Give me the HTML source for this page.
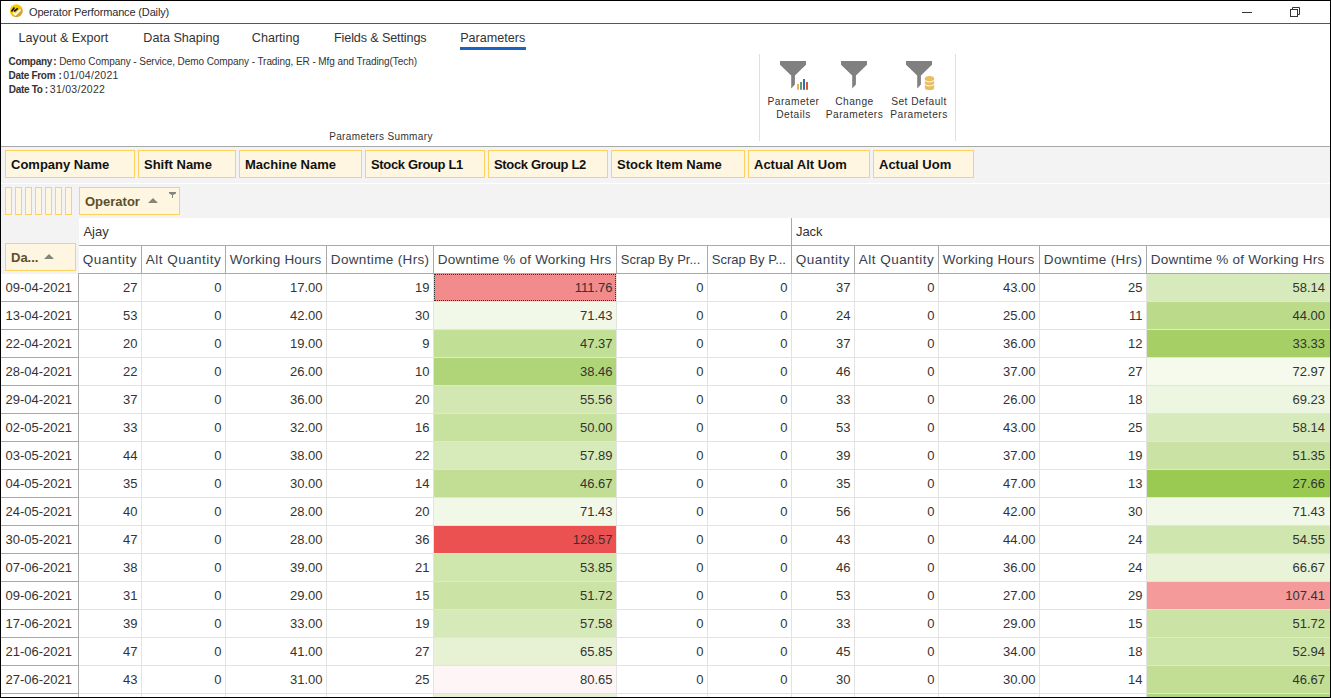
<!DOCTYPE html>
<html><head><meta charset="utf-8">
<style>
*{margin:0;padding:0;box-sizing:border-box}
html,body{width:1331px;height:698px;overflow:hidden;background:#fff}
body{position:relative;font-family:"Liberation Sans",sans-serif;color:#333}
.a{position:absolute}
.t{position:absolute;white-space:nowrap}
.hl{position:absolute;height:1px}
.vl{position:absolute;width:1px}
.box{position:absolute;background:#fff6e1;border:1px solid #fdd35e}
.gb{position:absolute;font-weight:bold;font-size:13px;color:#111;white-space:nowrap;line-height:28px}
.hd{position:absolute;font-size:13.5px;letter-spacing:0.2px;color:#37404c;white-space:nowrap;line-height:28px;top:246px;height:28px}
.c{position:absolute;font-size:13px;color:#333;white-space:nowrap;line-height:28px;text-align:right;height:28px}
.dc{position:absolute;font-size:13px;color:#333;white-space:nowrap;line-height:28px;height:28px;left:1px;width:77px;padding-left:4.5px}
</style></head><body>

<div class="a" style="left:0;top:0;width:1331px;height:1px;background:#000"></div>
<div class="a" style="left:0;top:0;width:1px;height:698px;background:#000"></div>
<div class="a" style="left:1330px;top:0;width:1px;height:698px;background:#000"></div>
<div class="a" style="left:0;top:697px;width:1331px;height:1px;background:#000"></div>
<svg class="a" style="left:9px;top:4px" width="14" height="14" viewBox="0 0 14 14">
<defs><linearGradient id="g1" x1="0.2" y1="0.2" x2="0.9" y2="0.9"><stop offset="0" stop-color="#fdd000"/><stop offset="0.5" stop-color="#f3c300"/><stop offset="0.62" stop-color="#d9aa2a"/><stop offset="1" stop-color="#cfa030"/></linearGradient></defs>
<circle cx="7.3" cy="6.75" r="6.5" fill="url(#g1)"/>
<path d="M2.4 7.5 L5.4 3.6 M5 7.4 L8.8 4.3" stroke="#111" stroke-width="1.6"/>
<path d="M4.3 8.7 L6.35 10.8 L11.5 5.6" stroke="#fff" stroke-width="1.8" fill="none"/>
</svg>
<div class="t" style="left:29px;top:4px;font-size:11px;letter-spacing:-0.15px;line-height:16px;color:#2b2b33">Operator Performance (Daily)</div>
<div class="a" style="left:1242px;top:12px;width:10px;height:1px;background:#333"></div>
<svg class="a" style="left:1289px;top:6px" width="12" height="12" viewBox="0 0 12 12">
<rect x="1.5" y="3.5" width="7" height="7" fill="none" stroke="#333" stroke-width="1"/>
<path d="M3.5 3.5 V1.5 H10.5 V8.5 H8.5" fill="none" stroke="#333" stroke-width="1"/>
</svg>
<div class="a" style="left:1px;top:23px;width:1329px;height:1px;background:#555"></div>
<div class="t" style="left:18.6px;top:29px;font-size:12.6px;line-height:18px;color:#333">Layout &amp; Export</div>
<div class="t" style="left:143.3px;top:29px;font-size:12.6px;line-height:18px;color:#333">Data Shaping</div>
<div class="t" style="left:251.8px;top:29px;font-size:12.6px;line-height:18px;color:#333">Charting</div>
<div class="t" style="left:334px;top:29px;font-size:12.6px;line-height:18px;color:#333;letter-spacing:-0.12px">Fields &amp; Settings</div>
<div class="t" style="left:460.2px;top:29px;font-size:12.6px;line-height:18px;color:#333">Parameters</div>
<div class="a" style="left:460px;top:47px;width:66px;height:3px;background:#1a62c4"></div>
<div class="t" style="left:8.5px;top:55px;font-size:10px;line-height:14px;color:#333;font-weight:bold;letter-spacing:-0.3px">Company</div>
<div class="t" style="left:53.3px;top:55px;font-size:10px;line-height:14px;color:#333;font-weight:bold;letter-spacing:-0.3px">:</div>
<div class="t" style="left:59.2px;top:55px;font-size:10px;line-height:14px;color:#333;letter-spacing:-0.07px">Demo Company - Service, Demo Company - Trading, ER - Mfg and Trading(Tech)</div>
<div class="t" style="left:8.5px;top:69px;font-size:10px;line-height:14px;color:#333;font-weight:bold;letter-spacing:-0.3px">Date From</div>
<div class="t" style="left:58.6px;top:69px;font-size:10px;line-height:14px;color:#333;font-weight:bold;letter-spacing:-0.3px">:</div>
<div class="t" style="left:63.3px;top:68px;font-size:10px;line-height:14px;color:#333;letter-spacing:0.28px;font-size:10.5px">01/04/2021</div>
<div class="t" style="left:8.8px;top:83px;font-size:10px;line-height:14px;color:#333;font-weight:bold;letter-spacing:-0.3px">Date To</div>
<div class="t" style="left:44.8px;top:83px;font-size:10px;line-height:14px;color:#333;font-weight:bold;letter-spacing:-0.3px">:</div>
<div class="t" style="left:49.8px;top:82px;font-size:10px;line-height:14px;color:#333;letter-spacing:0.28px;font-size:10.5px">31/03/2022</div>
<div class="t" style="left:329.2px;top:130px;font-size:10px;letter-spacing:0.35px;line-height:14px;color:#333">Parameters Summary</div>
<div class="a" style="left:759px;top:54px;width:1px;height:87px;background:#e0e0e0"></div>
<div class="a" style="left:955px;top:54px;width:1px;height:87px;background:#e0e0e0"></div>
<svg class="a" style="left:0;top:0" width="1331" height="100" viewBox="0 0 1331 100">
<path d="M780 61 H806 V64.75 L794.9 75.4 V84.5 L791.2 88.5 V75.4 L780 64.75 Z" fill="#808080"/>
<rect x="797" y="84" width="2" height="5.8" fill="#eab552"/>
<rect x="800" y="82" width="2" height="7.8" fill="#5d9b7c"/>
<rect x="803" y="79" width="2" height="10.8" fill="#3170b5"/>
<rect x="806" y="82" width="2" height="7.8" fill="#d8592f"/>
<path d="M841 61 H867 V64.75 L855.9 75.4 V84.5 L852.2 88.5 V75.4 L841 64.75 Z" fill="#808080"/>
<path d="M906 61 H932 V64.75 L920.9 75.4 V84.5 L917.2 88.5 V75.4 L906 64.75 Z" fill="#808080"/>
<g fill="#e9be62"><ellipse cx="929.5" cy="78.6" rx="4.6" ry="2.6"/><rect x="924.9" y="78.6" width="9.2" height="9.4"/><ellipse cx="929.5" cy="88" rx="4.6" ry="2"/></g><path d="M924.6 80.3 Q929.5 83.6 934.4 80.3 M924.6 84.3 Q929.5 87.6 934.4 84.3" stroke="#fff" stroke-width="0.9" fill="none"/>
</svg>
<div class="t" style="left:753.5px;width:80px;text-align:center;top:95px;font-size:10.2px;letter-spacing:0.48px;line-height:13px;color:#333">Parameter</div>
<div class="t" style="left:753.5px;width:80px;text-align:center;top:108px;font-size:10.2px;letter-spacing:0.48px;line-height:13px;color:#333">Details</div>
<div class="t" style="left:814.5px;width:80px;text-align:center;top:95px;font-size:10.2px;letter-spacing:0.48px;line-height:13px;color:#333">Change</div>
<div class="t" style="left:814.5px;width:80px;text-align:center;top:108px;font-size:10.2px;letter-spacing:0.48px;line-height:13px;color:#333">Parameters</div>
<div class="t" style="left:879px;width:80px;text-align:center;top:95px;font-size:10.2px;letter-spacing:0.48px;line-height:13px;color:#333">Set Default</div>
<div class="t" style="left:879px;width:80px;text-align:center;top:108px;font-size:10.2px;letter-spacing:0.48px;line-height:13px;color:#333">Parameters</div>
<div class="a" style="left:1px;top:146px;width:1329px;height:1px;background:#a8a8a8"></div>
<div class="a" style="left:1px;top:147px;width:1329px;height:36px;background:#f3f3f3"></div>
<div class="a" style="left:1px;top:184px;width:1329px;height:34px;background:#f3f3f3"></div>
<div class="a" style="left:1px;top:218px;width:78px;height:56px;background:#f3f3f3"></div>
<div class="box" style="left:5px;top:150px;width:130px;height:28px"><div class="gb" style="left:5px;top:0">Company Name</div></div>
<div class="box" style="left:138px;top:150px;width:98px;height:28px"><div class="gb" style="left:5px;top:0">Shift Name</div></div>
<div class="box" style="left:239px;top:150px;width:123px;height:28px"><div class="gb" style="left:5px;top:0">Machine Name</div></div>
<div class="box" style="left:365px;top:150px;width:120px;height:28px"><div class="gb" style="left:5px;top:0;letter-spacing:-0.35px">Stock Group L1</div></div>
<div class="box" style="left:488px;top:150px;width:120px;height:28px"><div class="gb" style="left:5px;top:0;letter-spacing:-0.35px">Stock Group L2</div></div>
<div class="box" style="left:611px;top:150px;width:134px;height:28px"><div class="gb" style="left:5px;top:0">Stock Item Name</div></div>
<div class="box" style="left:748px;top:150px;width:122px;height:28px"><div class="gb" style="left:5px;top:0">Actual Alt Uom</div></div>
<div class="box" style="left:873px;top:150px;width:101px;height:28px"><div class="gb" style="left:5px;top:0">Actual Uom</div></div>
<div class="box" style="left:5px;top:187px;width:7px;height:28px"></div>
<div class="box" style="left:15px;top:187px;width:7px;height:28px"></div>
<div class="box" style="left:25px;top:187px;width:7px;height:28px"></div>
<div class="box" style="left:35px;top:187px;width:7px;height:28px"></div>
<div class="box" style="left:45px;top:187px;width:7px;height:28px"></div>
<div class="box" style="left:55px;top:187px;width:7px;height:28px"></div>
<div class="box" style="left:65px;top:187px;width:7px;height:28px"></div>
<div class="box" style="left:79px;top:187px;width:101px;height:28px"><div class="gb" style="left:5px;top:0;color:#5c4f2c">Operator</div></div>
<svg class="a" style="left:148px;top:198px" width="10" height="5" viewBox="0 0 10 5"><path d="M0 5 L5 0 L10 5 Z" fill="#858578"/></svg>
<svg class="a" style="left:169px;top:192px" width="7" height="6" viewBox="0 0 7 6"><path d="M0 0 H7 V1.5 L4 3 V6 H3 V3 L0 1.5 Z" fill="#858585"/></svg>
<div class="box" style="left:5px;top:243px;width:71px;height:28px"><div class="gb" style="left:5px;top:0;color:#5c4f2c">Da...</div></div>
<svg class="a" style="left:44px;top:254px" width="10" height="5" viewBox="0 0 10 5"><path d="M0 5 L5 0 L10 5 Z" fill="#858578"/></svg>
<div class="t" style="left:83.4px;top:218px;font-size:13px;line-height:27px;color:#333">Ajay</div>
<div class="t" style="left:795.9px;top:218px;font-size:13px;line-height:27px;color:#333">Jack</div>
<div class="a" style="left:79px;top:245px;width:1251px;height:1px;background:#a9a9a9"></div>
<div class="a" style="left:791px;top:218px;width:1px;height:27px;background:#a9a9a9"></div>
<div class="hd" style="left:82.8px;letter-spacing:0.5px">Quantity</div>
<div class="a" style="left:141px;top:246px;width:1px;height:27px;background:#a9a9a9"></div>
<div class="hd" style="left:145.8px;letter-spacing:0.47px">Alt Quantity</div>
<div class="a" style="left:225px;top:246px;width:1px;height:27px;background:#a9a9a9"></div>
<div class="hd" style="left:229.8px">Working Hours</div>
<div class="a" style="left:326px;top:246px;width:1px;height:27px;background:#a9a9a9"></div>
<div class="hd" style="left:330.8px;letter-spacing:0.35px">Downtime (Hrs)</div>
<div class="a" style="left:433px;top:246px;width:1px;height:27px;background:#a9a9a9"></div>
<div class="hd" style="left:437.8px">Downtime % of Working Hrs</div>
<div class="a" style="left:616px;top:246px;width:1px;height:27px;background:#a9a9a9"></div>
<div class="hd" style="left:620.8px;letter-spacing:0;font-size:13px">Scrap By Pr...</div>
<div class="a" style="left:707px;top:246px;width:1px;height:27px;background:#a9a9a9"></div>
<div class="hd" style="left:711.8px;letter-spacing:0;font-size:13px">Scrap By P...</div>
<div class="a" style="left:791px;top:246px;width:1px;height:27px;background:#a9a9a9"></div>
<div class="hd" style="left:795.8px;letter-spacing:0.5px">Quantity</div>
<div class="a" style="left:854px;top:246px;width:1px;height:27px;background:#a9a9a9"></div>
<div class="hd" style="left:858.8px;letter-spacing:0.47px">Alt Quantity</div>
<div class="a" style="left:938px;top:246px;width:1px;height:27px;background:#a9a9a9"></div>
<div class="hd" style="left:942.8px">Working Hours</div>
<div class="a" style="left:1039px;top:246px;width:1px;height:27px;background:#a9a9a9"></div>
<div class="hd" style="left:1043.8px;letter-spacing:0.35px">Downtime (Hrs)</div>
<div class="a" style="left:1146px;top:246px;width:1px;height:27px;background:#a9a9a9"></div>
<div class="hd" style="left:1150.8px">Downtime % of Working Hrs</div>
<div class="a" style="left:79px;top:273px;width:1251px;height:1px;background:#a9a9a9"></div>
<div class="dc" style="top:274px">09-04-2021</div>
<div class="a" style="left:1px;top:301px;width:77px;height:1px;background:#a9a9a9"></div>
<div class="c" style="left:79px;width:58.5px;top:274px">27</div>
<div class="c" style="left:142px;width:79.5px;top:274px">0</div>
<div class="c" style="left:226px;width:96.5px;top:274px">17.00</div>
<div class="c" style="left:327px;width:102.5px;top:274px">19</div>
<div class="a" style="left:434px;top:274px;width:182px;height:27px;background:#f28b8b"></div>
<div class="c" style="left:434px;width:178.5px;top:274px">111.76</div>
<div class="c" style="left:617px;width:86.5px;top:274px">0</div>
<div class="c" style="left:708px;width:79.5px;top:274px">0</div>
<div class="c" style="left:792px;width:58.5px;top:274px">37</div>
<div class="c" style="left:855px;width:79.5px;top:274px">0</div>
<div class="c" style="left:939px;width:96.5px;top:274px">43.00</div>
<div class="c" style="left:1040px;width:102.5px;top:274px">25</div>
<div class="a" style="left:1147px;top:274px;width:183px;height:27px;background:#d7eabb"></div>
<div class="c" style="left:1147px;width:178.0px;top:274px">58.14</div>
<div class="a" style="left:79px;top:301px;width:1251px;height:1px;background:#e3e3e3"></div>
<div class="dc" style="top:302px">13-04-2021</div>
<div class="a" style="left:1px;top:329px;width:77px;height:1px;background:#a9a9a9"></div>
<div class="c" style="left:79px;width:58.5px;top:302px">53</div>
<div class="c" style="left:142px;width:79.5px;top:302px">0</div>
<div class="c" style="left:226px;width:96.5px;top:302px">42.00</div>
<div class="c" style="left:327px;width:102.5px;top:302px">30</div>
<div class="a" style="left:434px;top:302px;width:182px;height:27px;background:#f2f8e8"></div>
<div class="c" style="left:434px;width:178.5px;top:302px">71.43</div>
<div class="c" style="left:617px;width:86.5px;top:302px">0</div>
<div class="c" style="left:708px;width:79.5px;top:302px">0</div>
<div class="c" style="left:792px;width:58.5px;top:302px">24</div>
<div class="c" style="left:855px;width:79.5px;top:302px">0</div>
<div class="c" style="left:939px;width:96.5px;top:302px">25.00</div>
<div class="c" style="left:1040px;width:102.5px;top:302px">11</div>
<div class="a" style="left:1147px;top:302px;width:183px;height:27px;background:#bbdb8b"></div>
<div class="c" style="left:1147px;width:178.0px;top:302px">44.00</div>
<div class="a" style="left:79px;top:329px;width:1251px;height:1px;background:#e3e3e3"></div>
<div class="dc" style="top:330px">22-04-2021</div>
<div class="a" style="left:1px;top:357px;width:77px;height:1px;background:#a9a9a9"></div>
<div class="c" style="left:79px;width:58.5px;top:330px">20</div>
<div class="c" style="left:142px;width:79.5px;top:330px">0</div>
<div class="c" style="left:226px;width:96.5px;top:330px">19.00</div>
<div class="c" style="left:327px;width:102.5px;top:330px">9</div>
<div class="a" style="left:434px;top:330px;width:182px;height:27px;background:#c2df96"></div>
<div class="c" style="left:434px;width:178.5px;top:330px">47.37</div>
<div class="c" style="left:617px;width:86.5px;top:330px">0</div>
<div class="c" style="left:708px;width:79.5px;top:330px">0</div>
<div class="c" style="left:792px;width:58.5px;top:330px">37</div>
<div class="c" style="left:855px;width:79.5px;top:330px">0</div>
<div class="c" style="left:939px;width:96.5px;top:330px">36.00</div>
<div class="c" style="left:1040px;width:102.5px;top:330px">12</div>
<div class="a" style="left:1147px;top:330px;width:183px;height:27px;background:#a6d066"></div>
<div class="c" style="left:1147px;width:178.0px;top:330px">33.33</div>
<div class="a" style="left:79px;top:357px;width:1251px;height:1px;background:#e3e3e3"></div>
<div class="dc" style="top:358px">28-04-2021</div>
<div class="a" style="left:1px;top:385px;width:77px;height:1px;background:#a9a9a9"></div>
<div class="c" style="left:79px;width:58.5px;top:358px">22</div>
<div class="c" style="left:142px;width:79.5px;top:358px">0</div>
<div class="c" style="left:226px;width:96.5px;top:358px">26.00</div>
<div class="c" style="left:327px;width:102.5px;top:358px">10</div>
<div class="a" style="left:434px;top:358px;width:182px;height:27px;background:#b0d578"></div>
<div class="c" style="left:434px;width:178.5px;top:358px">38.46</div>
<div class="c" style="left:617px;width:86.5px;top:358px">0</div>
<div class="c" style="left:708px;width:79.5px;top:358px">0</div>
<div class="c" style="left:792px;width:58.5px;top:358px">46</div>
<div class="c" style="left:855px;width:79.5px;top:358px">0</div>
<div class="c" style="left:939px;width:96.5px;top:358px">37.00</div>
<div class="c" style="left:1040px;width:102.5px;top:358px">27</div>
<div class="a" style="left:1147px;top:358px;width:183px;height:27px;background:#f5faed"></div>
<div class="c" style="left:1147px;width:178.0px;top:358px">72.97</div>
<div class="a" style="left:79px;top:385px;width:1251px;height:1px;background:#e3e3e3"></div>
<div class="dc" style="top:386px">29-04-2021</div>
<div class="a" style="left:1px;top:413px;width:77px;height:1px;background:#a9a9a9"></div>
<div class="c" style="left:79px;width:58.5px;top:386px">37</div>
<div class="c" style="left:142px;width:79.5px;top:386px">0</div>
<div class="c" style="left:226px;width:96.5px;top:386px">36.00</div>
<div class="c" style="left:327px;width:102.5px;top:386px">20</div>
<div class="a" style="left:434px;top:386px;width:182px;height:27px;background:#d2e7b2"></div>
<div class="c" style="left:434px;width:178.5px;top:386px">55.56</div>
<div class="c" style="left:617px;width:86.5px;top:386px">0</div>
<div class="c" style="left:708px;width:79.5px;top:386px">0</div>
<div class="c" style="left:792px;width:58.5px;top:386px">33</div>
<div class="c" style="left:855px;width:79.5px;top:386px">0</div>
<div class="c" style="left:939px;width:96.5px;top:386px">26.00</div>
<div class="c" style="left:1040px;width:102.5px;top:386px">18</div>
<div class="a" style="left:1147px;top:386px;width:183px;height:27px;background:#edf6e1"></div>
<div class="c" style="left:1147px;width:178.0px;top:386px">69.23</div>
<div class="a" style="left:79px;top:413px;width:1251px;height:1px;background:#e3e3e3"></div>
<div class="dc" style="top:414px">02-05-2021</div>
<div class="a" style="left:1px;top:441px;width:77px;height:1px;background:#a9a9a9"></div>
<div class="c" style="left:79px;width:58.5px;top:414px">33</div>
<div class="c" style="left:142px;width:79.5px;top:414px">0</div>
<div class="c" style="left:226px;width:96.5px;top:414px">32.00</div>
<div class="c" style="left:327px;width:102.5px;top:414px">16</div>
<div class="a" style="left:434px;top:414px;width:182px;height:27px;background:#c7e19f"></div>
<div class="c" style="left:434px;width:178.5px;top:414px">50.00</div>
<div class="c" style="left:617px;width:86.5px;top:414px">0</div>
<div class="c" style="left:708px;width:79.5px;top:414px">0</div>
<div class="c" style="left:792px;width:58.5px;top:414px">53</div>
<div class="c" style="left:855px;width:79.5px;top:414px">0</div>
<div class="c" style="left:939px;width:96.5px;top:414px">43.00</div>
<div class="c" style="left:1040px;width:102.5px;top:414px">25</div>
<div class="a" style="left:1147px;top:414px;width:183px;height:27px;background:#d7eabb"></div>
<div class="c" style="left:1147px;width:178.0px;top:414px">58.14</div>
<div class="a" style="left:79px;top:441px;width:1251px;height:1px;background:#e3e3e3"></div>
<div class="dc" style="top:442px">03-05-2021</div>
<div class="a" style="left:1px;top:469px;width:77px;height:1px;background:#a9a9a9"></div>
<div class="c" style="left:79px;width:58.5px;top:442px">44</div>
<div class="c" style="left:142px;width:79.5px;top:442px">0</div>
<div class="c" style="left:226px;width:96.5px;top:442px">38.00</div>
<div class="c" style="left:327px;width:102.5px;top:442px">22</div>
<div class="a" style="left:434px;top:442px;width:182px;height:27px;background:#d7eaba"></div>
<div class="c" style="left:434px;width:178.5px;top:442px">57.89</div>
<div class="c" style="left:617px;width:86.5px;top:442px">0</div>
<div class="c" style="left:708px;width:79.5px;top:442px">0</div>
<div class="c" style="left:792px;width:58.5px;top:442px">39</div>
<div class="c" style="left:855px;width:79.5px;top:442px">0</div>
<div class="c" style="left:939px;width:96.5px;top:442px">37.00</div>
<div class="c" style="left:1040px;width:102.5px;top:442px">19</div>
<div class="a" style="left:1147px;top:442px;width:183px;height:27px;background:#cae3a4"></div>
<div class="c" style="left:1147px;width:178.0px;top:442px">51.35</div>
<div class="a" style="left:79px;top:469px;width:1251px;height:1px;background:#e3e3e3"></div>
<div class="dc" style="top:470px">04-05-2021</div>
<div class="a" style="left:1px;top:497px;width:77px;height:1px;background:#a9a9a9"></div>
<div class="c" style="left:79px;width:58.5px;top:470px">35</div>
<div class="c" style="left:142px;width:79.5px;top:470px">0</div>
<div class="c" style="left:226px;width:96.5px;top:470px">30.00</div>
<div class="c" style="left:327px;width:102.5px;top:470px">14</div>
<div class="a" style="left:434px;top:470px;width:182px;height:27px;background:#c1de94"></div>
<div class="c" style="left:434px;width:178.5px;top:470px">46.67</div>
<div class="c" style="left:617px;width:86.5px;top:470px">0</div>
<div class="c" style="left:708px;width:79.5px;top:470px">0</div>
<div class="c" style="left:792px;width:58.5px;top:470px">35</div>
<div class="c" style="left:855px;width:79.5px;top:470px">0</div>
<div class="c" style="left:939px;width:96.5px;top:470px">47.00</div>
<div class="c" style="left:1040px;width:102.5px;top:470px">13</div>
<div class="a" style="left:1147px;top:470px;width:183px;height:27px;background:#9bca53"></div>
<div class="c" style="left:1147px;width:178.0px;top:470px">27.66</div>
<div class="a" style="left:79px;top:497px;width:1251px;height:1px;background:#e3e3e3"></div>
<div class="dc" style="top:498px">24-05-2021</div>
<div class="a" style="left:1px;top:525px;width:77px;height:1px;background:#a9a9a9"></div>
<div class="c" style="left:79px;width:58.5px;top:498px">40</div>
<div class="c" style="left:142px;width:79.5px;top:498px">0</div>
<div class="c" style="left:226px;width:96.5px;top:498px">28.00</div>
<div class="c" style="left:327px;width:102.5px;top:498px">20</div>
<div class="a" style="left:434px;top:498px;width:182px;height:27px;background:#f2f8e8"></div>
<div class="c" style="left:434px;width:178.5px;top:498px">71.43</div>
<div class="c" style="left:617px;width:86.5px;top:498px">0</div>
<div class="c" style="left:708px;width:79.5px;top:498px">0</div>
<div class="c" style="left:792px;width:58.5px;top:498px">56</div>
<div class="c" style="left:855px;width:79.5px;top:498px">0</div>
<div class="c" style="left:939px;width:96.5px;top:498px">42.00</div>
<div class="c" style="left:1040px;width:102.5px;top:498px">30</div>
<div class="a" style="left:1147px;top:498px;width:183px;height:27px;background:#f2f8e8"></div>
<div class="c" style="left:1147px;width:178.0px;top:498px">71.43</div>
<div class="a" style="left:79px;top:525px;width:1251px;height:1px;background:#e3e3e3"></div>
<div class="dc" style="top:526px">30-05-2021</div>
<div class="a" style="left:1px;top:553px;width:77px;height:1px;background:#a9a9a9"></div>
<div class="c" style="left:79px;width:58.5px;top:526px">47</div>
<div class="c" style="left:142px;width:79.5px;top:526px">0</div>
<div class="c" style="left:226px;width:96.5px;top:526px">28.00</div>
<div class="c" style="left:327px;width:102.5px;top:526px">36</div>
<div class="a" style="left:434px;top:526px;width:182px;height:27px;background:#ec5151"></div>
<div class="c" style="left:434px;width:178.5px;top:526px">128.57</div>
<div class="c" style="left:617px;width:86.5px;top:526px">0</div>
<div class="c" style="left:708px;width:79.5px;top:526px">0</div>
<div class="c" style="left:792px;width:58.5px;top:526px">43</div>
<div class="c" style="left:855px;width:79.5px;top:526px">0</div>
<div class="c" style="left:939px;width:96.5px;top:526px">44.00</div>
<div class="c" style="left:1040px;width:102.5px;top:526px">24</div>
<div class="a" style="left:1147px;top:526px;width:183px;height:27px;background:#d0e6af"></div>
<div class="c" style="left:1147px;width:178.0px;top:526px">54.55</div>
<div class="a" style="left:79px;top:553px;width:1251px;height:1px;background:#e3e3e3"></div>
<div class="dc" style="top:554px">07-06-2021</div>
<div class="a" style="left:1px;top:581px;width:77px;height:1px;background:#a9a9a9"></div>
<div class="c" style="left:79px;width:58.5px;top:554px">38</div>
<div class="c" style="left:142px;width:79.5px;top:554px">0</div>
<div class="c" style="left:226px;width:96.5px;top:554px">39.00</div>
<div class="c" style="left:327px;width:102.5px;top:554px">21</div>
<div class="a" style="left:434px;top:554px;width:182px;height:27px;background:#cfe6ac"></div>
<div class="c" style="left:434px;width:178.5px;top:554px">53.85</div>
<div class="c" style="left:617px;width:86.5px;top:554px">0</div>
<div class="c" style="left:708px;width:79.5px;top:554px">0</div>
<div class="c" style="left:792px;width:58.5px;top:554px">46</div>
<div class="c" style="left:855px;width:79.5px;top:554px">0</div>
<div class="c" style="left:939px;width:96.5px;top:554px">36.00</div>
<div class="c" style="left:1040px;width:102.5px;top:554px">24</div>
<div class="a" style="left:1147px;top:554px;width:183px;height:27px;background:#e8f3d8"></div>
<div class="c" style="left:1147px;width:178.0px;top:554px">66.67</div>
<div class="a" style="left:79px;top:581px;width:1251px;height:1px;background:#e3e3e3"></div>
<div class="dc" style="top:582px">09-06-2021</div>
<div class="a" style="left:1px;top:609px;width:77px;height:1px;background:#a9a9a9"></div>
<div class="c" style="left:79px;width:58.5px;top:582px">31</div>
<div class="c" style="left:142px;width:79.5px;top:582px">0</div>
<div class="c" style="left:226px;width:96.5px;top:582px">29.00</div>
<div class="c" style="left:327px;width:102.5px;top:582px">15</div>
<div class="a" style="left:434px;top:582px;width:182px;height:27px;background:#cbe3a5"></div>
<div class="c" style="left:434px;width:178.5px;top:582px">51.72</div>
<div class="c" style="left:617px;width:86.5px;top:582px">0</div>
<div class="c" style="left:708px;width:79.5px;top:582px">0</div>
<div class="c" style="left:792px;width:58.5px;top:582px">53</div>
<div class="c" style="left:855px;width:79.5px;top:582px">0</div>
<div class="c" style="left:939px;width:96.5px;top:582px">27.00</div>
<div class="c" style="left:1040px;width:102.5px;top:582px">29</div>
<div class="a" style="left:1147px;top:582px;width:183px;height:27px;background:#f49a9a"></div>
<div class="c" style="left:1147px;width:178.0px;top:582px">107.41</div>
<div class="a" style="left:79px;top:609px;width:1251px;height:1px;background:#e3e3e3"></div>
<div class="dc" style="top:610px">17-06-2021</div>
<div class="a" style="left:1px;top:637px;width:77px;height:1px;background:#a9a9a9"></div>
<div class="c" style="left:79px;width:58.5px;top:610px">39</div>
<div class="c" style="left:142px;width:79.5px;top:610px">0</div>
<div class="c" style="left:226px;width:96.5px;top:610px">33.00</div>
<div class="c" style="left:327px;width:102.5px;top:610px">19</div>
<div class="a" style="left:434px;top:610px;width:182px;height:27px;background:#d6e9b9"></div>
<div class="c" style="left:434px;width:178.5px;top:610px">57.58</div>
<div class="c" style="left:617px;width:86.5px;top:610px">0</div>
<div class="c" style="left:708px;width:79.5px;top:610px">0</div>
<div class="c" style="left:792px;width:58.5px;top:610px">33</div>
<div class="c" style="left:855px;width:79.5px;top:610px">0</div>
<div class="c" style="left:939px;width:96.5px;top:610px">29.00</div>
<div class="c" style="left:1040px;width:102.5px;top:610px">15</div>
<div class="a" style="left:1147px;top:610px;width:183px;height:27px;background:#cbe3a5"></div>
<div class="c" style="left:1147px;width:178.0px;top:610px">51.72</div>
<div class="a" style="left:79px;top:637px;width:1251px;height:1px;background:#e3e3e3"></div>
<div class="dc" style="top:638px">21-06-2021</div>
<div class="a" style="left:1px;top:665px;width:77px;height:1px;background:#a9a9a9"></div>
<div class="c" style="left:79px;width:58.5px;top:638px">47</div>
<div class="c" style="left:142px;width:79.5px;top:638px">0</div>
<div class="c" style="left:226px;width:96.5px;top:638px">41.00</div>
<div class="c" style="left:327px;width:102.5px;top:638px">27</div>
<div class="a" style="left:434px;top:638px;width:182px;height:27px;background:#e7f2d5"></div>
<div class="c" style="left:434px;width:178.5px;top:638px">65.85</div>
<div class="c" style="left:617px;width:86.5px;top:638px">0</div>
<div class="c" style="left:708px;width:79.5px;top:638px">0</div>
<div class="c" style="left:792px;width:58.5px;top:638px">45</div>
<div class="c" style="left:855px;width:79.5px;top:638px">0</div>
<div class="c" style="left:939px;width:96.5px;top:638px">34.00</div>
<div class="c" style="left:1040px;width:102.5px;top:638px">18</div>
<div class="a" style="left:1147px;top:638px;width:183px;height:27px;background:#cde5a9"></div>
<div class="c" style="left:1147px;width:178.0px;top:638px">52.94</div>
<div class="a" style="left:79px;top:665px;width:1251px;height:1px;background:#e3e3e3"></div>
<div class="dc" style="top:666px">27-06-2021</div>
<div class="a" style="left:1px;top:693px;width:77px;height:1px;background:#a9a9a9"></div>
<div class="c" style="left:79px;width:58.5px;top:666px">43</div>
<div class="c" style="left:142px;width:79.5px;top:666px">0</div>
<div class="c" style="left:226px;width:96.5px;top:666px">31.00</div>
<div class="c" style="left:327px;width:102.5px;top:666px">25</div>
<div class="a" style="left:434px;top:666px;width:182px;height:27px;background:#fef6f6"></div>
<div class="c" style="left:434px;width:178.5px;top:666px">80.65</div>
<div class="c" style="left:617px;width:86.5px;top:666px">0</div>
<div class="c" style="left:708px;width:79.5px;top:666px">0</div>
<div class="c" style="left:792px;width:58.5px;top:666px">30</div>
<div class="c" style="left:855px;width:79.5px;top:666px">0</div>
<div class="c" style="left:939px;width:96.5px;top:666px">30.00</div>
<div class="c" style="left:1040px;width:102.5px;top:666px">14</div>
<div class="a" style="left:1147px;top:666px;width:183px;height:27px;background:#c1de94"></div>
<div class="c" style="left:1147px;width:178.0px;top:666px">46.67</div>
<div class="a" style="left:79px;top:693px;width:1251px;height:1px;background:#e3e3e3"></div>
<div class="a" style="left:1px;top:721px;width:77px;height:1px;background:#a9a9a9"></div>
<div class="a" style="left:434px;top:694px;width:182px;height:27px;background:#e6f1d6"></div>
<div class="a" style="left:1147px;top:694px;width:183px;height:27px;background:#acd67f"></div>
<div class="a" style="left:79px;top:721px;width:1251px;height:1px;background:#e3e3e3"></div>
<div class="a" style="left:78px;top:273px;width:1px;height:425px;background:#a9a9a9"></div>
<div class="a" style="left:141px;top:274px;width:1px;height:424px;background:#e3e3e3"></div>
<div class="a" style="left:225px;top:274px;width:1px;height:424px;background:#e3e3e3"></div>
<div class="a" style="left:326px;top:274px;width:1px;height:424px;background:#e3e3e3"></div>
<div class="a" style="left:433px;top:274px;width:1px;height:424px;background:#e3e3e3"></div>
<div class="a" style="left:616px;top:274px;width:1px;height:424px;background:#e3e3e3"></div>
<div class="a" style="left:707px;top:274px;width:1px;height:424px;background:#e3e3e3"></div>
<div class="a" style="left:791px;top:274px;width:1px;height:424px;background:#e3e3e3"></div>
<div class="a" style="left:854px;top:274px;width:1px;height:424px;background:#e3e3e3"></div>
<div class="a" style="left:938px;top:274px;width:1px;height:424px;background:#e3e3e3"></div>
<div class="a" style="left:1039px;top:274px;width:1px;height:424px;background:#e3e3e3"></div>
<div class="a" style="left:1146px;top:274px;width:1px;height:424px;background:#e3e3e3"></div>
<div class="a" style="left:434px;top:274px;width:182px;height:27px;border:1px dotted #333"></div>
<div class="a" style="left:1330px;top:0;width:1px;height:698px;background:#000"></div>
<div class="a" style="left:0;top:697px;width:1331px;height:1px;background:#000"></div>
<div class="a" style="left:0;top:0;width:1px;height:698px;background:#000"></div>
</body></html>
